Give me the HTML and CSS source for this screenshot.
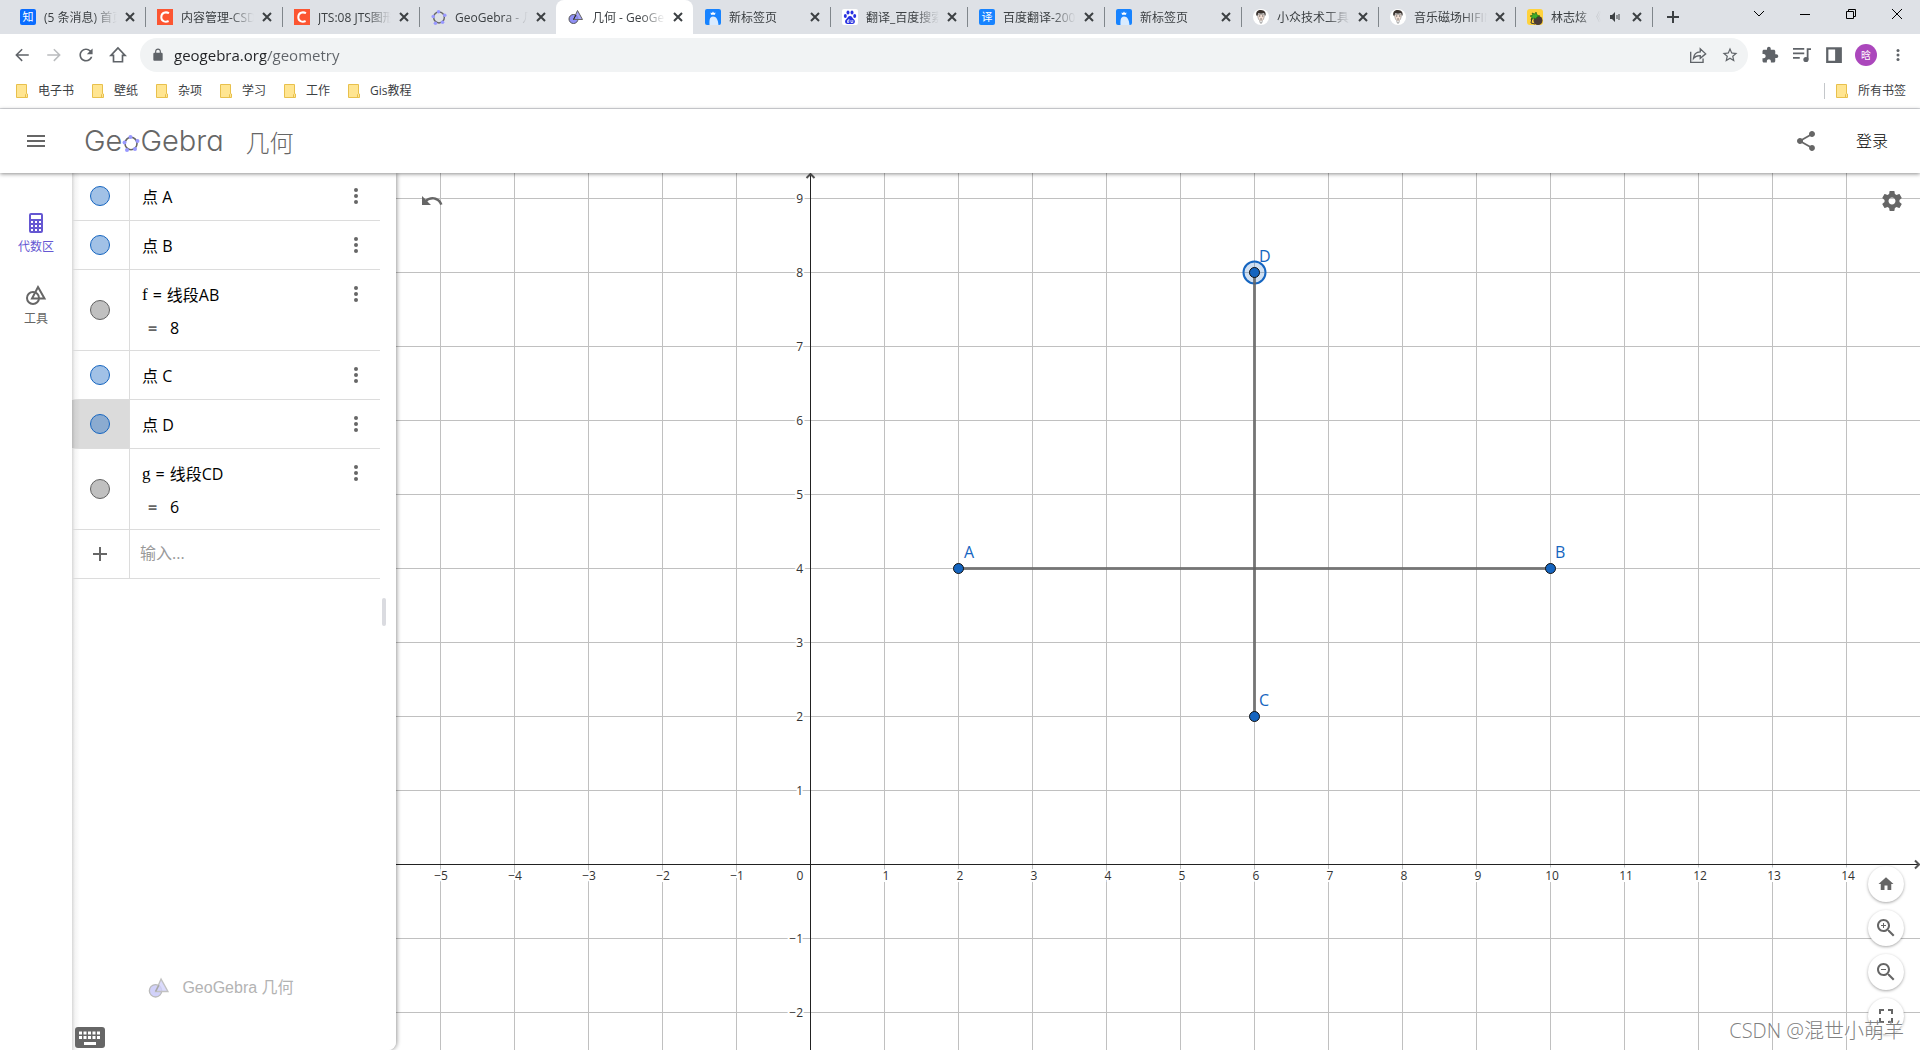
FILE: index.html
```html
<!DOCTYPE html>
<html lang="zh-CN">
<head>
<meta charset="utf-8">
<title>几何 - GeoGebra</title>
<link rel="stylesheet" href="styles.css">
</head>
<body>
<svg class="defs" aria-hidden="true">
  <symbol id="i-close" viewBox="0 0 16 16"><path d="M4 4l8 8M12 4l-8 8" stroke="currentColor" stroke-width="2" fill="none"/></symbol>
  <symbol id="i-more" viewBox="0 0 24 24"><circle cx="12" cy="6" r="2"/><circle cx="12" cy="12" r="2"/><circle cx="12" cy="18" r="2"/></symbol>
  <symbol id="i-folder" viewBox="0 0 12 14"><path d="M.5.5h10v9l1 .5v3.500H.5z" fill="#ffe591" stroke="#e8c04c"/><path d="M9.500 13.500v-3l1-1" fill="none" stroke="#e8c04c"/></symbol>
  <symbol id="i-csdn" viewBox="0 0 16 16"><path fill="#fc5531" d="M0 0h16v16H0z"/><path d="M12 4.200C9 2.600 4.300 3.200 4.300 8.200c0 4.800 4.700 5 7.300 3.800" fill="none" stroke="#fff" stroke-width="2"/></symbol>
  <symbol id="i-newtab" viewBox="0 0 16 16"><rect width="16" height="16" rx="2" fill="#1783ff"/><path d="M4.500 16c0-4-.5-8 3.500-8.500 3.500 0 5 3 5.500 8.500z" fill="#d9ebff"/><path d="M5.500 3.500l1.500.5 1-1.500L9 4l1.500-.5-.5 2.300H6z" fill="#fff"/></symbol>
  <symbol id="i-face" viewBox="0 0 16 16"><circle cx="8" cy="8" r="8" fill="#fff"/><path d="M4.500 5.500C5 10.500 6.500 12 8 12s3-1.500 3.500-6.500z" fill="#f3dfd4" stroke="#666" stroke-width=".5"/><path d="M3.300 6.500C2.500 2 5.500.800 8 1c3.500.200 5.300 2.500 4.500 5.700-.8-.2-.9-2-1.500-2.400-2 .6-4.500.5-5.700 0-.4.700-.6 1.700-.9 2.500z" fill="#3a322e"/><path d="M6 7h1.300M9 7h1.300M7.300 10h1.500" stroke="#333" stroke-width=".8"/><path d="M6.500 12.500L8 14.500l1.500-2" fill="none" stroke="#999"/></symbol>
  <symbol id="i-geo" viewBox="0 0 16 16"><circle cx="5.500" cy="10" r="4.500" fill="#8f8ff5" stroke="#555" /><path d="M9.500 1.500l5 9h-9z" fill="#8f8ff5" fill-opacity=".8" stroke="#666"/><path d="M5.500 10.500L8 6" stroke="#222"/></symbol>
  <symbol id="i-penta" viewBox="0 0 18 18"><ellipse cx="9" cy="9.500" rx="6" ry="6.200" fill="none" stroke="#666" stroke-width="1.600"/><g fill="#9999ff"><circle cx="8.500" cy="3" r="2"/><circle cx="15.500" cy="7" r="2"/><circle cx="2.500" cy="8.500" r="2"/><circle cx="13" cy="15" r="2"/><circle cx="5" cy="16" r="2"/></g></symbol>
</svg>

<div class="browser">
  <div class="tabstrip">
    <div class="tab"><svg class="fav" viewBox="0 0 16 16"><rect width="16" height="16" rx="2" fill="#0a6cff"/><text class="favtext" x="8" y="12" text-anchor="middle">知</text></svg><span class="title">(5 条消息) 首页</span><button class="x" aria-label="关闭"><svg><use href="#i-close"/></svg></button></div>
    <div class="tab"><svg class="fav"><use href="#i-csdn"/></svg><span class="title">内容管理-CSDN</span><button class="x" aria-label="关闭"><svg><use href="#i-close"/></svg></button></div>
    <div class="tab"><svg class="fav"><use href="#i-csdn"/></svg><span class="title">JTS:08 JTS图形</span><button class="x" aria-label="关闭"><svg><use href="#i-close"/></svg></button></div>
    <div class="tab before"><svg class="fav"><use href="#i-penta"/></svg><span class="title">GeoGebra - 几</span><button class="x" aria-label="关闭"><svg><use href="#i-close"/></svg></button></div>
    <div class="tab active"><svg class="fav"><use href="#i-geo"/></svg><span class="title">几何 - GeoGebra</span><button class="x" aria-label="关闭"><svg><use href="#i-close"/></svg></button></div>
    <div class="tab"><svg class="fav"><use href="#i-newtab"/></svg><span class="title">新标签页</span><button class="x" aria-label="关闭"><svg><use href="#i-close"/></svg></button></div>
    <div class="tab"><svg class="fav" viewBox="0 0 16 16"><rect width="16" height="16" rx="2" fill="#fff"/><g fill="#2932e1"><ellipse cx="3.300" cy="7" rx="1.500" ry="2"/><ellipse cx="6" cy="3.500" rx="1.500" ry="2.100"/><ellipse cx="10" cy="3.500" rx="1.500" ry="2.100"/><ellipse cx="12.700" cy="7" rx="1.500" ry="2"/><path d="M8 7c2 0 2.500 2.200 4 3.500 1.600 1.500 1 4.500-1.500 4.500H5.500C3 15 2.400 12 4 10.500 5.500 9.200 6 7 8 7z"/></g><path d="M6.800 10v3.500H5.500v-2h1M9 11v2.500h1.800V11" fill="none" stroke="#fff" stroke-width=".8"/></svg><span class="title">翻译_百度搜索</span><button class="x" aria-label="关闭"><svg><use href="#i-close"/></svg></button></div>
    <div class="tab"><svg class="fav" viewBox="0 0 16 16"><rect width="16" height="16" rx="2" fill="#1783ff"/><text class="favtext" x="8" y="12" text-anchor="middle">译</text></svg><span class="title">百度翻译-200种</span><button class="x" aria-label="关闭"><svg><use href="#i-close"/></svg></button></div>
    <div class="tab"><svg class="fav"><use href="#i-newtab"/></svg><span class="title">新标签页</span><button class="x" aria-label="关闭"><svg><use href="#i-close"/></svg></button></div>
    <div class="tab"><svg class="fav"><use href="#i-face"/></svg><span class="title">小众技术工具库</span><button class="x" aria-label="关闭"><svg><use href="#i-close"/></svg></button></div>
    <div class="tab"><svg class="fav"><use href="#i-face"/></svg><span class="title">音乐磁场HIFINI</span><button class="x" aria-label="关闭"><svg><use href="#i-close"/></svg></button></div>
    <div class="tab"><svg class="fav" viewBox="0 0 16 16"><rect width="16" height="16" rx="3" fill="#ffd23c"/><circle cx="11" cy="11.500" r="4.500" fill="#4b3b36"/><path d="M3 7l3-1-1-2 3 1 1-2 1 3 3 1-3 1-1 2-2-1-3 2 1-3z" fill="#3fae2a" stroke="#1c5c14" stroke-width=".6"/><path d="M5 9l-1 5 4 1" fill="none" stroke="#333"/></svg><span class="title">林志炫 《单身</span><svg class="sound" viewBox="0 0 12 12"><path d="M1 4h2l3-3v10L3 8H1z" fill="#3c4043"/><path d="M8 4v4M10 3v6" stroke="#3c4043"/></svg><button class="x" aria-label="关闭"><svg><use href="#i-close"/></svg></button></div>
    <button class="newtab" aria-label="新建标签页"><svg viewBox="0 0 12 12"><path d="M6 0v12M0 6h12" stroke="#3c4043" stroke-width="2"/></svg></button>
    <div class="wincontrols">
      <button aria-label="搜索标签页"><svg viewBox="0 0 12 12"><path d="M1 3l5 5 5-5" class="thin"/></svg></button>
      <button aria-label="最小化"><svg viewBox="0 0 12 12"><path d="M1 6.500h10" class="thin"/></svg></button>
      <button aria-label="还原"><svg viewBox="0 0 12 12"><path d="M1.500 3.500h7v7h-7zM3.500 3.500v-2h7v7h-2" class="thin"/></svg></button>
      <button aria-label="关闭窗口"><svg viewBox="0 0 12 12"><path d="M1 1l10 10M11 1L1 11" class="thin"/></svg></button>
    </div>
  </div>

  <div class="toolbar">
    <button aria-label="后退"><svg viewBox="0 0 24 24"><path d="M21 11H6.830l6.090-6.090L11.500 3.500 3 12l8.500 8.500 1.420-1.410L6.830 13H21v-2z"/></svg></button>
    <button class="off" aria-label="前进"><svg viewBox="0 0 24 24"><path d="M12.500 3.500l-1.420 1.410L17.170 11H3v2h14.170l-6.090 6.090 1.420 1.410L21 12z"/></svg></button>
    <button aria-label="重新加载"><svg viewBox="0 0 24 24"><path d="M18.200 5.800C16.600 4.200 14.430 3.200 12 3.200c-4.860 0-8.800 3.940-8.800 8.800s3.940 8.800 8.800 8.800c4.100 0 7.520-2.800 8.500-6.600h-2.290c-.9 2.560-3.340 4.400-6.210 4.400-3.640 0-6.600-2.960-6.600-6.600S8.360 5.400 12 5.400c1.830 0 3.450.76 4.640 1.960L13.100 10.900h7.700V3.200L18.200 5.800z"/></svg></button>
    <button aria-label="主页"><svg viewBox="0 0 24 24"><path d="M12 2.500L2.500 12.500h3.500V21h12V12.500h3.500z" fill="none" stroke="currentColor" stroke-width="2.200"/></svg></button>
    <form class="omnibox">
      <svg class="lock" viewBox="0 0 24 24"><path d="M18 8h-1V6c0-2.760-2.240-5-5-5S7 3.240 7 6v2H6c-1.100 0-2 .9-2 2v10c0 1.100.9 2 2 2h12c1.100 0 2-.9 2-2V10c0-1.100-.9-2-2-2zM9 8V6c0-1.660 1.340-3 3-3s3 1.340 3 3v2z"/></svg>
      <input class="url" type="text" aria-label="地址栏" value="geogebra.org/geometry">
      <button type="button" aria-label="分享此页"><svg viewBox="0 0 16 16"><path d="M1.500 5v9.500h11V11" fill="none" stroke="currentColor" stroke-width="1.200"/><path d="M4 11c.3-4 2.700-5.700 6-5.800V2.500L14.800 7 10 11V8.500C7.500 8.400 5.500 9 4 11z" fill="none" stroke="currentColor" stroke-width="1.200"/></svg></button>
      <button type="button" aria-label="为此标签页添加书签"><svg viewBox="0 0 24 24"><path d="M22 9.240l-7.190-.62L12 2 9.190 8.630 2 9.240l5.460 4.730L5.820 21 12 17.270 18.180 21l-1.630-7.030L22 9.240zM12 15.400l-3.760 2.270 1-4.280-3.320-2.880 4.380-.38L12 6.100l1.710 4.040 4.380.38-3.320 2.880 1 4.280L12 15.400z"/></svg></button>
    </form>
    <button aria-label="扩展程序"><svg viewBox="0 0 24 24"><path d="M20.500 11H19V7c0-1.100-.9-2-2-2h-4V3.500C13 2.120 11.880 1 10.500 1S8 2.120 8 3.500V5H4c-1.100 0-1.990.9-1.990 2v3.800H3.500c1.490 0 2.700 1.210 2.700 2.700s-1.210 2.700-2.700 2.700H2V20c0 1.100.9 2 2 2h3.800v-1.500c0-1.490 1.210-2.700 2.700-2.700 1.490 0 2.700 1.210 2.700 2.700V22H17c1.100 0 2-.9 2-2v-4h1.500c1.380 0 2.500-1.120 2.500-2.500S21.880 11 20.500 11z"/></svg></button>
    <button aria-label="媒体控件"><svg viewBox="0 0 16 16"><path d="M0 2.500h10M0 6.500h10M0 10.500h6M13 12V2.700h3" fill="none" stroke="currentColor" stroke-width="1.600"/><circle cx="11.500" cy="12" r="2.300"/></svg></button>
    <button aria-label="侧边栏"><svg viewBox="0 0 16 16"><path d="M1 1h14v14H1zM3 3v10h6V3z" fill-rule="evenodd"/></svg></button>
    <button class="avatar" aria-label="个人资料">晗</button>
    <button aria-label="菜单"><svg class="menu" viewBox="0 0 24 24"><use href="#i-more"/></svg></button>
  </div>

  <nav class="bookmarks">
    <a href="#"><svg><use href="#i-folder"/></svg>电子书</a>
    <a href="#"><svg><use href="#i-folder"/></svg>壁纸</a>
    <a href="#"><svg><use href="#i-folder"/></svg>杂项</a>
    <a href="#"><svg><use href="#i-folder"/></svg>学习</a>
    <a href="#"><svg><use href="#i-folder"/></svg>工作</a>
    <a href="#"><svg><use href="#i-folder"/></svg>Gis教程</a>
    <a class="all" href="#"><svg><use href="#i-folder"/></svg>所有书签</a>
  </nav>
</div>

<header class="appbar">
  <button class="icon" aria-label="菜单"><svg viewBox="0 0 24 24"><path d="M3 18h18v-2H3v2zm0-5h18v-2H3v2zm0-7v2h18V6H3z"/></svg></button>
  <a class="logo" href="#">Ge<svg><use href="#i-penta"/></svg>Gebra</a>
  <span class="appname">几何</span>
  <button class="icon share" aria-label="分享"><svg viewBox="0 0 24 24"><path d="M18 16.080c-.76 0-1.440.3-1.960.77L8.910 12.700c.05-.23.09-.46.09-.7s-.04-.47-.09-.7l7.050-4.110c.54.5 1.250.81 2.040.81 1.660 0 3-1.340 3-3s-1.340-3-3-3-3 1.340-3 3c0 .24.040.47.09.7L8.040 9.810C7.500 9.310 6.790 9 6 9c-1.660 0-3 1.340-3 3s1.340 3 3 3c.79 0 1.500-.31 2.040-.81l7.120 4.160c-.05.21-.08.43-.08.650 0 1.610 1.310 2.920 2.920 2.920s2.920-1.310 2.920-2.920-1.310-2.920-2.920-2.920z"/></svg></button>
  <a class="login" href="#">登录</a>
</header>

<main class="workspace">
  <nav class="rail">
    <button class="on"><svg viewBox="0 0 24 24"><path d="M7 2h10a2 2 0 0 1 2 2v16a2 2 0 0 1-2 2H7a2 2 0 0 1-2-2V4a2 2 0 0 1 2-2zm0 2v4h10V4zm0 6v2h2v-2zm4 0v2h2v-2zm4 0v2h2v-2zm-8 4v2h2v-2zm4 0v2h2v-2zm4 0v2h2v-2zm-8 4v2h2v-2zm4 0v2h2v-2zm4 0v2h2v-2z" fill-rule="evenodd"/></svg>代数区</button>
    <button><svg viewBox="0 0 24 24"><g fill="none" stroke="currentColor" stroke-width="2"><circle cx="9" cy="15" r="6"/><path d="M14 4l6.500 11.500H8z"/></g></svg>工具</button>
  </nav>

  <section class="algebra">
    <ul class="rows">
      <li class="row"><span class="vis"><button class="dot" aria-label="显示 A"></button></span><div class="expr"><p>点 A</p></div><button class="more" aria-label="更多"><svg viewBox="0 0 24 24"><use href="#i-more"/></svg></button></li>
      <li class="row"><span class="vis"><button class="dot" aria-label="显示 B"></button></span><div class="expr"><p>点 B</p></div><button class="more" aria-label="更多"><svg viewBox="0 0 24 24"><use href="#i-more"/></svg></button></li>
      <li class="row"><span class="vis"><button class="dot gray" aria-label="显示 f"></button></span><div class="expr"><p class="def"><span class="var">f</span><span>=</span><span>线段AB</span></p><p class="value"><b>=</b>8</p></div><button class="more" aria-label="更多"><svg viewBox="0 0 24 24"><use href="#i-more"/></svg></button></li>
      <li class="row"><span class="vis"><button class="dot" aria-label="显示 C"></button></span><div class="expr"><p>点 C</p></div><button class="more" aria-label="更多"><svg viewBox="0 0 24 24"><use href="#i-more"/></svg></button></li>
      <li class="row"><span class="vis selected"><button class="dot" aria-label="显示 D"></button></span><div class="expr"><p>点 D</p></div><button class="more" aria-label="更多"><svg viewBox="0 0 24 24"><use href="#i-more"/></svg></button></li>
      <li class="row"><span class="vis"><button class="dot gray" aria-label="显示 g"></button></span><div class="expr"><p class="def"><span class="var">g</span><span>=</span><span>线段CD</span></p><p class="value"><b>=</b>6</p></div><button class="more" aria-label="更多"><svg viewBox="0 0 24 24"><use href="#i-more"/></svg></button></li>
      <li class="row"><span class="vis"><button class="add" aria-label="添加"><svg viewBox="0 0 14 14"><path d="M7 0v14M0 7h14" stroke="#666" stroke-width="2"/></svg></button></span><input class="entry" type="text" placeholder="输入..." aria-label="输入"></li>
    </ul>
    <div class="brand"><svg viewBox="0 0 16 16"><use href="#i-geo"/></svg>GeoGebra 几何</div>
    <button class="keyboard" aria-label="键盘"><svg viewBox="0 0 30 21"><rect width="30" height="21" rx="3" fill="#666"/><path d="M4 6h22M4 10.500h22" stroke="#fff" stroke-width="3" stroke-dasharray="3 1.500"/><path d="M9 16.500h12" stroke="#fff" stroke-width="3"/></svg></button>
    <div class="dragger"></div>
  </section>

  <section class="graphics">
    <svg class="plot" role="img" aria-label="绘图区">
      <defs><pattern id="grid" x="44" y="25" width="74" height="74" patternUnits="userSpaceOnUse"><path fill="#c0c0c0" d="M0 0h74v1H1v73H0z"/></pattern></defs>
      <rect width="100%" height="100%" fill="url(#grid)"/>
      <rect x="414" width="1" height="100%" fill="#222"/>
      <rect y="691" width="100%" height="1" fill="#222"/>
      <path d="M410.500 5l4-4 4 4" class="arrow"/>
      <svg x="100%" y="691" overflow="visible"><path d="M-5-3.500l4 4-4 4" class="arrow"/></svg>
      <g class="num" text-anchor="middle">
        <text x="45" y="707">−5</text><text x="119" y="707">−4</text><text x="193" y="707">−3</text><text x="267" y="707">−2</text><text x="341" y="707">−1</text><text x="404" y="707">0</text>
        <text x="490" y="707">1</text><text x="564" y="707">2</text><text x="638" y="707">3</text><text x="712" y="707">4</text><text x="786" y="707">5</text><text x="860" y="707">6</text><text x="934" y="707">7</text><text x="1008" y="707">8</text><text x="1082" y="707">9</text><text x="1156" y="707">10</text><text x="1230" y="707">11</text><text x="1304" y="707">12</text><text x="1378" y="707">13</text><text x="1452" y="707">14</text>
      </g>
      <g class="num" text-anchor="end">
        <text x="407" y="30">9</text><text x="407" y="104">8</text><text x="407" y="178">7</text><text x="407" y="252">6</text><text x="407" y="326">5</text><text x="407" y="400">4</text><text x="407" y="474">3</text><text x="407" y="548">2</text><text x="407" y="622">1</text><text x="407" y="770">−1</text><text x="407" y="844">−2</text>
      </g>
      <path d="M562.500 395.500h592" class="seg"/>
      <circle cx="858.500" cy="99.500" r="11" fill="#1565c0" fill-opacity=".2" stroke="#1565c0" stroke-width="2"/>
      <path d="M858.500 99.500v444" class="seg"/>
      <g class="pt"><circle cx="562.500" cy="395.500" r="5"/><circle cx="1154.500" cy="395.500" r="5"/><circle cx="858.500" cy="543.500" r="5"/><circle cx="858.500" cy="99.500" r="5"/></g>
      <g class="name"><text x="568" y="385">A</text><text x="1159" y="385">B</text><text x="863" y="533">C</text><text x="863" y="89">D</text></g>
    </svg>
    <button class="icon undo" aria-label="撤销"><svg viewBox="0 0 24 24"><path d="M12.500 8c-2.650 0-5.050.99-6.900 2.600L2 7v9h9l-3.620-3.620c1.390-1.160 3.160-1.880 5.120-1.880 3.540 0 6.550 2.310 7.600 5.500l2.370-.78C21.080 11.030 17.150 8 12.500 8z"/></svg></button>
    <button class="icon settings" aria-label="设置"><svg viewBox="0 0 24 24"><path d="M19.430 12.980c.04-.32.07-.64.07-.98s-.03-.66-.07-.98l2.110-1.650c.19-.15.24-.42.12-.64l-2-3.460c-.12-.22-.39-.3-.61-.22l-2.490 1c-.52-.4-1.080-.73-1.690-.98l-.38-2.650C14.460 2.180 14.250 2 14 2h-4c-.25 0-.46.18-.49.42l-.38 2.650c-.61.25-1.170.59-1.690.98l-2.490-1c-.23-.09-.49 0-.61.22l-2 3.460c-.13.22-.07.49.12.64l2.110 1.650c-.04.32-.07.65-.07.98s.03.66.07.98l-2.110 1.650c-.19.15-.24.42-.12.64l2 3.460c.12.22.39.3.61.22l2.490-1c.52.4 1.080.73 1.690.98l.38 2.650c.03.24.24.42.49.42h4c.25 0 .46-.18.49-.42l.38-2.650c.61-.25 1.170-.59 1.690-.98l2.490 1c.23.09.49 0 .61-.22l2-3.460c.12-.22.07-.49-.12-.64l-2.110-1.650zM12 15.500c-1.930 0-3.500-1.570-3.500-3.500s1.570-3.500 3.500-3.500 3.500 1.570 3.500 3.500-1.570 3.500-3.500 3.500z"/></svg></button>
    <div class="zoom">
      <button aria-label="标准视图"><svg class="small" viewBox="0 0 24 24"><path d="M10 20v-6h4v6h5v-8h3L12 3 2 12h3v8z"/></svg></button>
      <button aria-label="放大"><svg viewBox="0 0 24 24"><path d="M15.500 14h-.79l-.28-.27C15.410 12.590 16 11.110 16 9.500 16 5.910 13.090 3 9.500 3S3 5.910 3 9.500 5.910 16 9.500 16c1.610 0 3.090-.59 4.230-1.570l.27.28v.79l5 4.990L20.490 19l-4.990-5zm-6 0C7.010 14 5 11.990 5 9.500S7.010 5 9.500 5 14 7.010 14 9.500 11.990 14 9.500 14zm2.500-4h-2v2H9v-2H7V9h2V7h1v2h2v1z"/></svg></button>
      <button aria-label="缩小"><svg viewBox="0 0 24 24"><path d="M15.500 14h-.79l-.28-.27C15.410 12.590 16 11.110 16 9.500 16 5.910 13.090 3 9.500 3S3 5.910 3 9.500 5.910 16 9.500 16c1.610 0 3.090-.59 4.230-1.570l.27.28v.79l5 4.990L20.490 19l-4.990-5zm-6 0C7.010 14 5 11.990 5 9.500S7.010 5 9.500 5 14 7.010 14 9.500 11.990 14 9.500 14zM7 9h5v1H7z"/></svg></button>
      <button aria-label="全屏"><svg viewBox="0 0 24 24"><path d="M7 14H5v5h5v-2H7v-3zm-2-4h2V7h3V5H5v5zm12 7h-3v2h5v-5h-2v3zM14 5v2h3v3h2V5h-5z"/></svg></button>
    </div>
    <div class="credit">CSDN @混世小萌羊</div>
  </section>
</main>
</body>
</html>
```
FILE: styles.css
```css
* { box-sizing: border-box; }

body {
  margin: 0;
  height: 100vh;
  display: flex;
  flex-direction: column;
  overflow: hidden;
  background: #fff;
  color: #000;
  font: 12px/16px "Open Sans", "Noto Sans CJK SC", sans-serif;
}

button {
  display: flex;
  align-items: center;
  justify-content: center;
  flex: none;
  margin: 0;
  padding: 0;
  border: 0;
  background: none;
  color: inherit;
  font: inherit;
}

input { border: 0; padding: 0; background: none; font: inherit; outline: 0; }
a { color: inherit; text-decoration: none; }
p { margin: 0; }
svg { display: block; flex: none; fill: currentColor; }
.defs { position: absolute; width: 0; height: 0; }

/* Tab strip */
.tabstrip {
  display: flex;
  height: 34px;
  padding-left: 8px;
  background: #dee1e6;
  color: #3c4043;
}
.tab {
  position: relative;
  display: flex;
  align-items: center;
  flex: 0 1 137px;
  min-width: 0;
  padding: 0 7px 0 12px;
}
.tab::after {
  content: "";
  position: absolute;
  right: -1px;
  top: 7px;
  width: 1px;
  height: 20px;
  background: #80868b;
}
.tab.before::after, .tab.active::after { display: none; }
.tab.active { background: #fff; border-radius: 8px 8px 0 0; }
.fav { width: 16px; height: 16px; margin-right: 8px; }
.favtext { font-size: 11px; fill: #fff; }
.title {
  flex: 1;
  min-width: 0;
  padding-top: 1px;
  overflow: hidden;
  white-space: nowrap;
  -webkit-mask-image: linear-gradient(to left, transparent, #000 24px);
  mask-image: linear-gradient(to left, transparent, #000 24px);
}
.x { width: 16px; height: 16px; margin-left: 5px; }
.x svg { width: 16px; height: 16px; }
.sound { width: 12px; height: 12px; margin: 0 3px 0 8px; }
.newtab { width: 28px; margin-left: 7px; }
.newtab svg { width: 12px; height: 12px; }
.wincontrols { display: flex; margin-left: auto; height: 28px; color: #000; }
.wincontrols button { width: 46px; }
.wincontrols svg { width: 12px; height: 12px; }
.thin { fill: none; stroke: currentColor; }

/* Address bar */
.toolbar {
  display: flex;
  align-items: center;
  height: 42px;
  padding: 0 6px;
  color: #5f6368;
}
.toolbar button { width: 32px; height: 32px; }
.toolbar svg { width: 18px; height: 18px; }
.toolbar .off { color: #babcbe; }
.omnibox {
  display: flex;
  align-items: center;
  flex: 1;
  height: 34px;
  margin: 0 6px;
  padding: 0 2px 0 11px;
  border-radius: 17px;
  background: #f1f3f4;
}
.toolbar .lock { width: 14px; height: 14px; margin-right: 9px; }
.url {
  flex: 1;
  min-width: 0;
  font-size: 15px;
  line-height: 20px;
  color: transparent;
  background: linear-gradient(to right, #202124 92px, #5f6368 92px);
  -webkit-background-clip: text;
  background-clip: text;
}
.toolbar .avatar {
  width: 22px;
  height: 22px;
  margin: 0 5px;
  border-radius: 50%;
  background: #ab47bc;
  color: #fff;
  font-size: 10px;
}

/* Bookmarks */
.bookmarks {
  display: flex;
  align-items: center;
  gap: 18px;
  height: 33px;
  padding: 0 14px 2px 16px;
  border-bottom: 1px solid #dadce0;
  color: #3c4043;
}
.bookmarks a { display: flex; align-items: center; gap: 10px; }
.bookmarks svg { width: 12px; height: 14px; }
.bookmarks .all { margin-left: auto; padding-left: 11px; border-left: 1px solid #c4c7ca; }

/* Application header */
.appbar {
  position: relative;
  z-index: 3;
  display: flex;
  align-items: center;
  flex: none;
  height: 64px;
  padding: 0 32px 0 24px;
  background: #fff;
  color: #666;
  box-shadow: 0 1px 4px rgba(0, 0, 0, .45);
}
.icon { width: 24px; height: 24px; color: #666; }
.icon svg { width: 24px; height: 24px; }
.logo {
  display: flex;
  align-items: center;
  margin-left: 36px;
  font: 300 29px/32px Inter, "Open Sans", sans-serif;
  font-feature-settings: "cv11";
}
.logo svg { width: 18px; height: 18px; margin-top: 4px; }
.appname { margin-left: 22px; padding-top: 4px; font-size: 24px; line-height: 32px; font-weight: 300; }
.share { margin-left: auto; }
.login { margin-left: 38px; font-size: 16px; line-height: 24px; font-weight: 300; color: #000; }

/* Main area */
.workspace { display: flex; flex: 1; min-height: 0; }
.rail {
  display: flex;
  flex-direction: column;
  gap: 20px;
  flex: none;
  width: 72px;
  padding-top: 38px;
}
.rail button { flex-direction: column; gap: 4px; height: 52px; justify-content: flex-start; color: #666; }
.rail .on { color: #6557d2; }
.rail svg { width: 24px; height: 24px; }

.algebra {
  position: relative;
  z-index: 2;
  display: flex;
  flex-direction: column;
  flex: none;
  width: 324px;
  background: linear-gradient(to right, #d8d8d8, #f4f4f4 3px, #fff 8px);
  border-radius: 0 0 8px 0;
  box-shadow: 1px 0 4px rgba(0, 0, 0, .4);
  clip-path: inset(0 -8px 0 0);
}
.rows { list-style: none; margin: -1px 16px 0 0; padding: 0; }
.row { display: flex; min-height: 49px; border-bottom: 1px solid #dcdcdc; }
.vis {
  display: flex;
  align-items: center;
  justify-content: center;
  flex: none;
  width: 58px;
  padding-right: 1px;
  border-right: 1px solid #dcdcdc;
}
.vis.selected { background: rgba(0, 0, 0, .14); }
.dot { width: 20px; height: 20px; border: 1px solid #1565c0; border-radius: 50%; background: rgba(21, 101, 192, .4); }
.dot.gray { border-color: #616161; background: #c0c0c0; }
.expr { flex: 1; padding: 9px 0 7px 12px; font-size: 16px; line-height: 32px; }
.def { display: flex; gap: 5px; }
.var { font-family: "Liberation Serif", serif; font-size: 17px; }
.value { padding: 1px 0 0 6px; margin-bottom: -1px; }
.value b { display: inline-block; width: 22px; color: #666; }
.more { width: 24px; height: 24px; margin: 12px; color: #666; }
.more svg { width: 24px; height: 24px; }
.add svg { width: 14px; height: 14px; }
.entry { flex: 1; min-width: 0; padding: 0 0 2px 10px; font-size: 16px; }
.entry::placeholder { color: #999; }
.brand {
  display: flex;
  align-items: center;
  justify-content: center;
  gap: 12px;
  margin: auto 26px 27px 0;
  font: 16px/24px "Liberation Sans", "Noto Sans CJK SC", sans-serif;
  color: #b3b3b3;
}
.brand svg { width: 22px; height: 22px; opacity: .4; }
.keyboard { width: 30px; height: 21px; margin: 0 0 2px 3px; }
.keyboard svg { width: 30px; height: 21px; }
.dragger {
  position: absolute;
  right: 10px;
  top: calc(50% - 14px);
  width: 4px;
  height: 28px;
  border-radius: 2px;
  background: #dadbe0;
}

/* Graphics view */
.graphics { position: relative; flex: 1; min-width: 0; overflow: hidden; }
.plot { position: absolute; left: 0; top: 0; width: 100%; height: 100%; }
.arrow { fill: none; stroke: #555; stroke-width: 2; }
.num { font-size: 12px; fill: #333; stroke: #fff; stroke-width: 4px; paint-order: stroke; }
.seg { fill: none; stroke: #616161; stroke-width: 3; stroke-opacity: .8; }
.pt { fill: #1565c0; stroke: #111; }
.name { font-size: 16px; fill: #1565c0; }
.undo { position: absolute; left: 24px; top: 16px; }
.settings { position: absolute; right: 16px; top: 16px; }
.zoom {
  position: absolute;
  right: 16px;
  bottom: 16px;
  display: flex;
  flex-direction: column;
  gap: 8px;
}
.zoom button {
  width: 36px;
  height: 36px;
  border-radius: 50%;
  background: #fff;
  color: #666;
  box-shadow: 0 1px 3px rgba(0, 0, 0, .35);
}
.zoom svg { width: 24px; height: 24px; }
.zoom .small { width: 18px; height: 18px; }
.credit {
  position: absolute;
  right: 16px;
  bottom: 5px;
  font-size: 20px;
  line-height: 28px;
  font-weight: 300;
  color: #808080;
  text-shadow: 1px 1px 1px #fff;
}
```
